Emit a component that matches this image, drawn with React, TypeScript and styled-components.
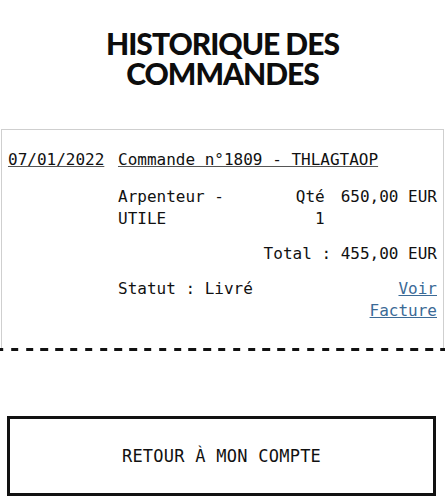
import React from "react";
import styled, { createGlobalStyle } from "styled-components";

const GlobalStyle = createGlobalStyle`
  html, body {
    margin: 0;
    padding: 0;
    background: #fff;
  }
  body {
    font-family: "DejaVu Sans Mono", "Liberation Mono", monospace;
    color: #111;
  }
`;

const Page = styled.div`
  width: 445px;
`;

const Title = styled.h1`
  margin: 0;
  padding-top: 28px;
  font-family: Lato, "Noto Sans", sans-serif;
  font-weight: 900;
  font-size: 30px;
  line-height: 30px;
  letter-spacing: -1px;
  text-align: center;
  text-transform: uppercase;
  color: #0d0d0d;
`;

const OrderBlock = styled.section`
  margin-top: 41px;
`;

const Card = styled.div`
  margin: 0 1px;
  border: 1px solid #cfcfcf;
  border-bottom: none;
  padding: 19px 6px 26px 6px;
  display: grid;
  grid-template-columns: 110px 1fr;
  font-size: 16px;
  line-height: 22px;
`;

const DashedLine = styled.div`
  height: 3px;
  background-image: repeating-linear-gradient(
    90deg,
    #111 0 7.4px,
    transparent 7.4px 14.8px
  );
  background-position: -3.8px 0;
`;

const OrderDate = styled.span`
  grid-column: 1;
  text-decoration: underline;
  text-decoration-color: #555;
`;

const OrderTitle = styled.span`
  grid-column: 2;
  text-decoration: underline;
  text-decoration-color: #555;
`;

const Detail = styled.div<{ $gap: number }>`
  grid-column: 2;
  margin-top: ${(p) => p.$gap}px;
`;

const ItemRow = styled.div`
  display: grid;
  grid-template-columns: 1fr auto auto;
  column-gap: 16px;
`;

const Qty = styled.div`
  text-align: right;
`;

const Total = styled.div`
  text-align: right;
`;

const StatusRow = styled.div`
  display: flex;
  justify-content: space-between;
`;

const InvoiceLink = styled.a`
  width: 70px;
  text-align: right;
  color: #3b6a96;
  text-decoration: underline;
`;

const BackButton = styled.button`
  display: block;
  box-sizing: border-box;
  width: 429px;
  height: 80px;
  margin: 65px 0 0 7px;
  border: 3px solid #111;
  background: #fff;
  font-family: "DejaVu Sans Mono", "Liberation Mono", monospace;
  font-size: 17px;
  letter-spacing: 0.25px;
  color: #111;
  text-transform: uppercase;
  cursor: pointer;
`;

const App: React.FC = () => {
  return (
    <Page>
      <GlobalStyle />
      <Title>
        Historique des
        <br />
        commandes
      </Title>
      <OrderBlock>
        <Card>
          <OrderDate>07/01/2022</OrderDate>
          <OrderTitle>Commande n°1809 - THLAGTAOP</OrderTitle>
          <Detail $gap={15}>
            <ItemRow>
              <div>Arpenteur - UTILE</div>
              <Qty>
                Qté
                <br />1
              </Qty>
              <div>650,00 EUR</div>
            </ItemRow>
          </Detail>
          <Detail $gap={13}>
            <Total>Total : 455,00 EUR</Total>
          </Detail>
          <Detail $gap={13}>
            <StatusRow>
              <span>Statut : Livré</span>
              <InvoiceLink href="#">Voir Facture</InvoiceLink>
            </StatusRow>
          </Detail>
        </Card>
        <DashedLine />
      </OrderBlock>
      <BackButton>Retour à mon compte</BackButton>
    </Page>
  );
};

export default App;
